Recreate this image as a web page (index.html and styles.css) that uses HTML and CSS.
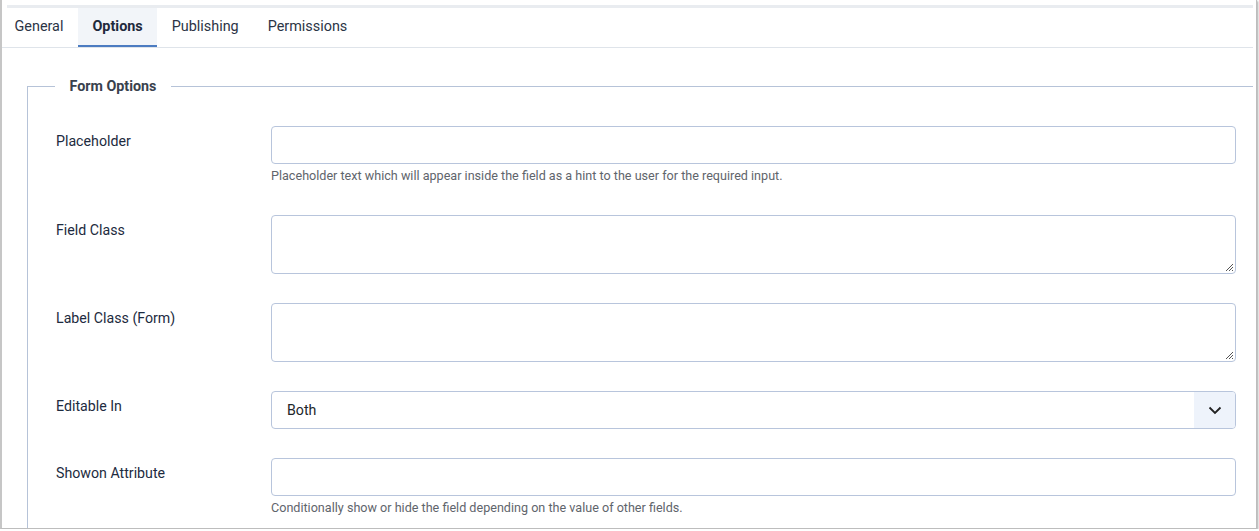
FILE: index.html
```html
<!DOCTYPE html>
<html>
<head>
<meta charset="utf-8">
<link rel="stylesheet" href="styles.css">
</head>
<body>
<div class="window">
  <div class="topbar"></div>
  <div class="tabs">
    <div class="tab">General</div>
    <div class="tab active">Options</div>
    <div class="tab">Publishing</div>
    <div class="tab">Permissions</div>
  </div>
  <div class="panel">
    <fieldset class="group">
      <legend>Form Options</legend>
      <div class="row">
        <label class="label">Placeholder</label>
        <div class="control">
          <div class="input"></div>
          <div class="help">Placeholder text which will appear inside the field as a hint to the user for the required input.</div>
        </div>
      </div>
      <div class="row">
        <label class="label">Field Class</label>
        <div class="control">
          <div class="input textarea"><svg class="grip" width="10" height="10" viewBox="0 0 10 10"><path d="M9 2 L2 9 M9 5 L5 9 M9 8 L8 9" stroke="#555" stroke-width="1" fill="none"/></svg></div>
        </div>
      </div>
      <div class="row">
        <label class="label">Label Class (Form)</label>
        <div class="control">
          <div class="input textarea"><svg class="grip" width="10" height="10" viewBox="0 0 10 10"><path d="M9 2 L2 9 M9 5 L5 9 M9 8 L8 9" stroke="#555" stroke-width="1" fill="none"/></svg></div>
        </div>
      </div>
      <div class="row">
        <label class="label">Editable In</label>
        <div class="control">
          <div class="input select">
            <span class="value">Both</span>
            <span class="caret"><svg width="14" height="10" viewBox="0 0 14 10"><path d="M1.5 2.5 L7 8 L12.5 2.5" stroke="#222" stroke-width="1.8" fill="none"/></svg></span>
          </div>
        </div>
      </div>
      <div class="row">
        <label class="label">Showon Attribute</label>
        <div class="control">
          <div class="input"></div>
          <div class="help">Conditionally show or hide the field depending on the value of other fields.</div>
        </div>
      </div>
    </fieldset>
  </div>
</div>
</body>
</html>
```

FILE: styles.css
```css
* { box-sizing: border-box; }
html, body { margin: 0; padding: 0; background: #fff; }
body { font-family: Roboto, "Noto Sans", Arial, sans-serif; color: #22262a; }

.window {
  width: 1257px;
  height: 529px;
  border-left: 2px solid #c6c6c6;
  border-right: 1px solid #bdbdbd;
  border-bottom: 1px solid #bdbdbd;
  box-shadow: 1px 1px 2px rgba(0,0,0,0.35);
  overflow: hidden;
  padding: 5px 3px 0 5px;
  background: #fff;
}

.topbar {
  height: 3px;
  background: #e9ecf0;
}

.tabs {
  display: flex;
  height: 40px;
  border-bottom: 1px solid #dfe4ea;
  margin-left: -7px;
}
.tab {
  padding: 0 14.5px;
  height: 39px;
  line-height: 37px;
  font-size: 14.4px;
  color: #2b3445;
  border-bottom: 2px solid transparent;
}
.tab.active {
  background: #f2f5f9;
  font-weight: 700;
  border-bottom-color: #4c7cc1;
  color: #1f2a3c;
}

.panel {
  padding: 28px 0 0 20px;
}

.group {
  margin: 0;
  border: 0;
  border-top: 1px solid #b6c3d8;
  border-left: 1px solid #b6c3d8;
  padding: 30px 17px 40px 28px;
  min-width: 0;
}
.group legend {
  padding: 0 14.5px;
  margin-left: -1px;
  font-size: 14.3px;
  font-weight: 700;
  color: #39414d;
  line-height: 20px;
}

.row {
  display: flex;
  margin-bottom: 29px;
}
.label {
  width: 215px;
  flex: none;
  font-size: 14.2px;
  line-height: 20px;
  padding-top: 5px;
  color: #1d2b40;
}
.control {
  flex: 1;
}
.input {
  position: relative;
  height: 38px;
  border: 1px solid #b8c5dc;
  border-radius: 4px;
  background: #fff;
}
.textarea { height: 59px; }
.grip { position: absolute; right: 1px; bottom: 1px; }
.help {
  font-size: 12.6px;
  line-height: 18px;
  color: #5f656c;
  margin-top: 3px;
  margin-bottom: 1px;
}
.select {
  display: flex;
  align-items: center;
  overflow: hidden;
}
.select .value {
  flex: 1;
  padding-left: 15px;
  font-size: 14.2px;
  color: #22262a;
}
.select .caret {
  width: 41px;
  height: 100%;
  background: #eef3fb;
  display: flex;
  align-items: center;
  justify-content: center;
}
```
